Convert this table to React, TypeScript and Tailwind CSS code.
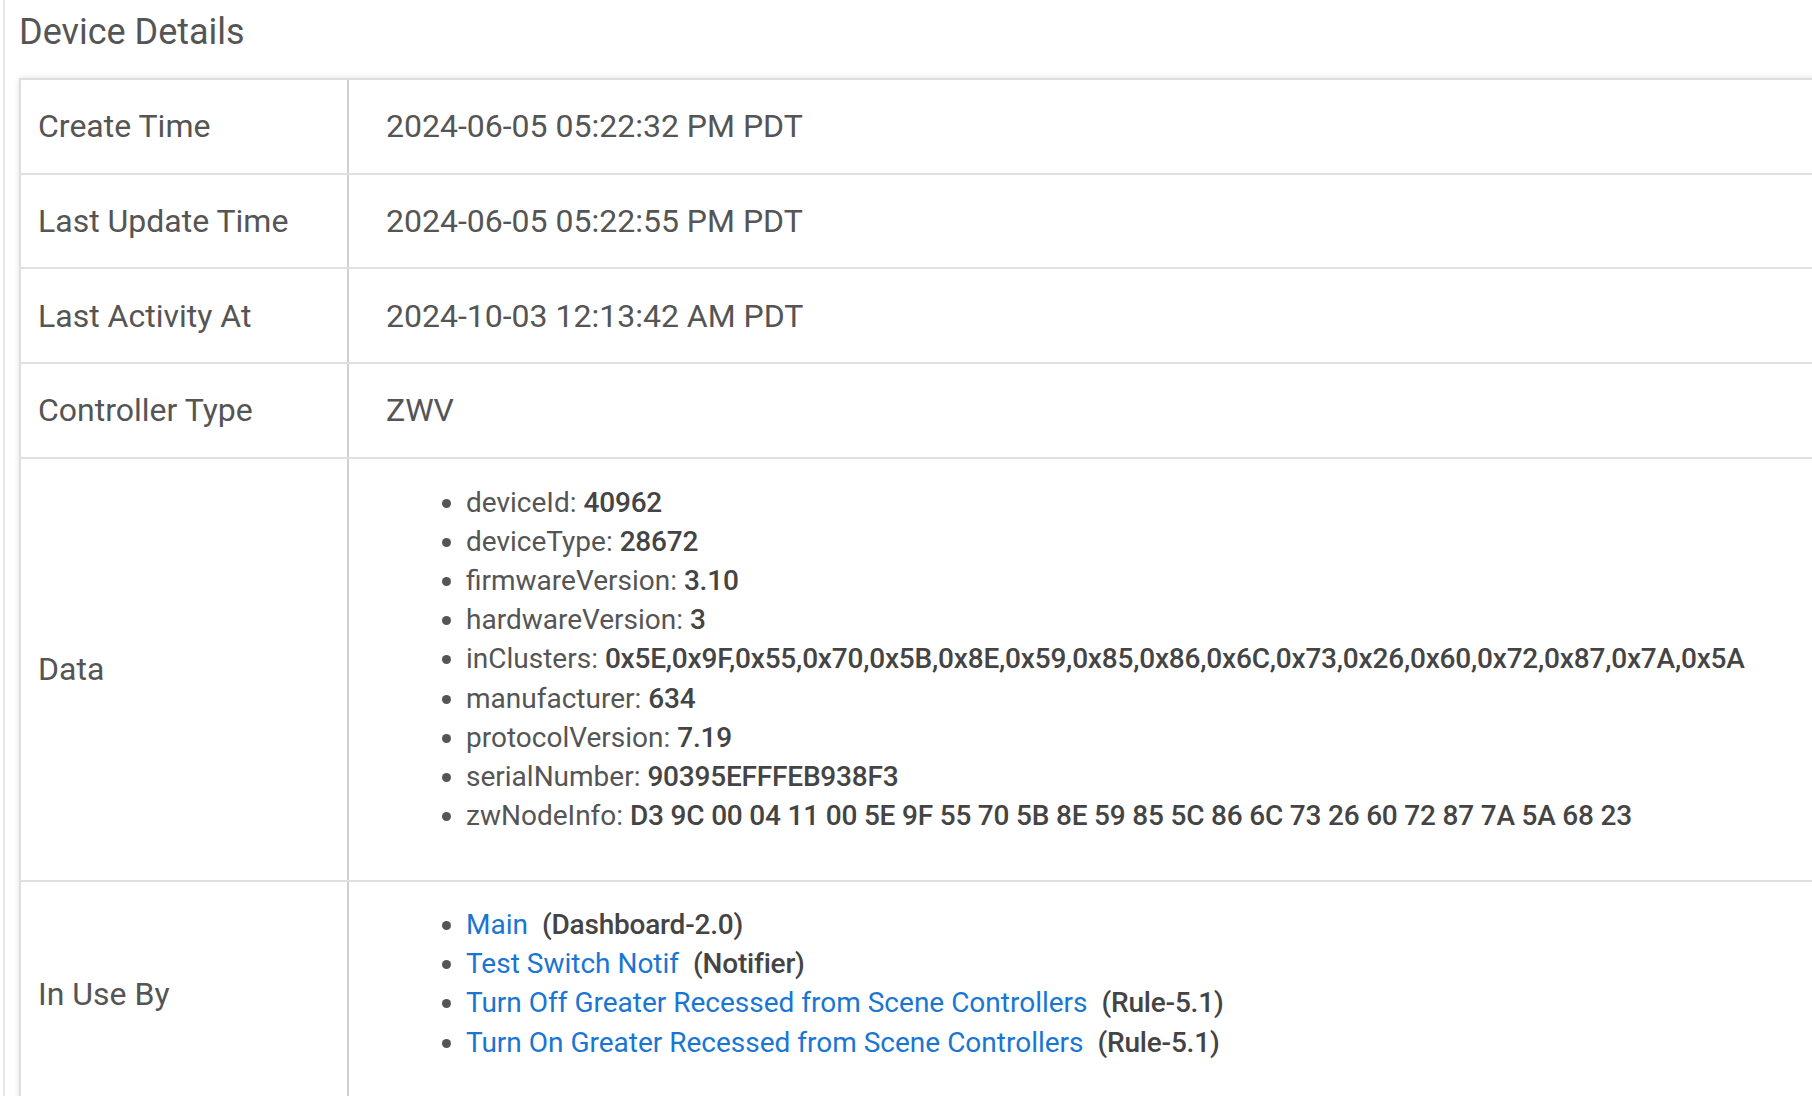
import React from 'react';

interface DataItem {
  name: string;
  value: string;
}

interface UsedBy {
  label: string;
  kind: string;
}

const dataItems: DataItem[] = [
  { name: 'deviceId', value: '40962' },
  { name: 'deviceType', value: '28672' },
  { name: 'firmwareVersion', value: '3.10' },
  { name: 'hardwareVersion', value: '3' },
  {
    name: 'inClusters',
    value: '0x5E,0x9F,0x55,0x70,0x5B,0x8E,0x59,0x85,0x86,0x6C,0x73,0x26,0x60,0x72,0x87,0x7A,0x5A',
  },
  { name: 'manufacturer', value: '634' },
  { name: 'protocolVersion', value: '7.19' },
  { name: 'serialNumber', value: '90395EFFFEB938F3' },
  { name: 'zwNodeInfo', value: 'D3 9C 00 04 11 00 5E 9F 55 70 5B 8E 59 85 5C 86 6C 73 26 60 72 87 7A 5A 68 23' },
];

const usedBy: UsedBy[] = [
  { label: 'Main', kind: 'Dashboard-2.0' },
  { label: 'Test Switch Notif', kind: 'Notifier' },
  { label: 'Turn Off Greater Recessed from Scene Controllers', kind: 'Rule-5.1' },
  { label: 'Turn On Greater Recessed from Scene Controllers', kind: 'Rule-5.1' },
];

const simpleRows = [
  { label: 'Create Time', value: '2024-06-05 05:22:32 PM PDT' },
  { label: 'Last Update Time', value: '2024-06-05 05:22:55 PM PDT' },
  { label: 'Last Activity At', value: '2024-10-03 12:13:42 AM PDT' },
  { label: 'Controller Type', value: 'ZWV' },
];

function Row({ label, children, tall }: { label: string; children: React.ReactNode; tall?: boolean }) {
  return (
    <div className="flex border-b-2 border-[#e0e0e0]">
      <div className="w-[328px] shrink-0 flex items-center pl-[17px] border-r-2 border-[#d0d0d0] text-[32px]">
        {label}
      </div>
      <div
        className={
          tall
            ? 'flex-1 pl-[37px] pt-[23px] pb-[45px]'
            : 'flex-1 pl-[37px] h-[92.7px] flex items-center text-[32px]'
        }
      >
        {children}
      </div>
    </div>
  );
}

export default function App() {
  return (
    <div
      className="h-[1096px] overflow-hidden bg-white text-[#555]"
      style={{ fontFamily: 'Roboto, "Liberation Sans", sans-serif' }}
    >
      <div className="ml-[3px] h-full border-l-2 border-[#e6e6e6]">
        <h1 className="pl-[14px] pt-[7px] h-[78px] text-[36px] leading-[50px] font-normal text-[#555]">
          Device Details
        </h1>

        {/* details table */}
        <div className="ml-[14px] w-[1900px] border-t-2 border-l-2 border-[#dedede] shadow-[0_0_6px_rgba(0,0,0,0.12)]">
          {simpleRows.map((r) => (
            <Row key={r.label} label={r.label}>
              {r.value}
            </Row>
          ))}

          <Row label="Data" tall>
            <ul className="list-disc pl-[80px] pt-[1px] text-[28px] leading-[39.15px]">
              {dataItems.map((d) => (
                <li key={d.name}>
                  {d.name}: <span className="font-medium tracking-[-0.2px] text-[#444]">{d.value}</span>
                </li>
              ))}
            </ul>
          </Row>

          <Row label="In Use By" tall>
            <ul className="list-disc pl-[80px] text-[28px] leading-[39.15px]">
              {usedBy.map((u) => (
                <li key={u.label}>
                  <a href="#" className="text-[#1976d2]">
                    {u.label}
                  </a>
                  <span className="ml-[14px] font-medium tracking-[-0.2px] text-[#444]">({u.kind})</span>
                </li>
              ))}
            </ul>
          </Row>
        </div>
      </div>
    </div>
  );
}
